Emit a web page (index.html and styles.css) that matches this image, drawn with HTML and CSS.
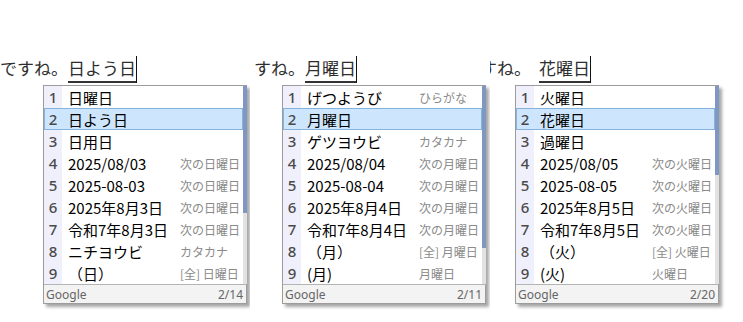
FILE: index.html
```html
<!DOCTYPE html>
<html lang="ja">
<head>
<meta charset="utf-8">
<title>IME candidates</title>
<link rel="stylesheet" href="styles.css">
</head>
<body>
<div class="stage">
  <section class="shot shot-1">
    <div class="line"><span class="pre">ですね。</span><span class="comp">日よう日</span><span class="caret"></span></div>
    <div class="cand">
      <div class="body">
        <ol class="rows">
          <li class="row"><span class="num">1</span><span class="txt">日曜日</span><span class="note"></span></li>
          <li class="row sel"><span class="num">2</span><span class="txt">日よう日</span><span class="note"></span></li>
          <li class="row"><span class="num">3</span><span class="txt">日用日</span><span class="note"></span></li>
          <li class="row"><span class="num">4</span><span class="txt">2025/08/03</span><span class="note">次の日曜日</span></li>
          <li class="row"><span class="num">5</span><span class="txt">2025-08-03</span><span class="note">次の日曜日</span></li>
          <li class="row"><span class="num">6</span><span class="txt">2025年8月3日</span><span class="note">次の日曜日</span></li>
          <li class="row"><span class="num">7</span><span class="txt">令和7年8月3日</span><span class="note">次の日曜日</span></li>
          <li class="row"><span class="num">8</span><span class="txt">ニチヨウビ</span><span class="note">カタカナ</span></li>
          <li class="row"><span class="num">9</span><span class="txt">（日）</span><span class="note">[全] 日曜日</span></li>
        </ol>
        <div class="scroll"><div class="thumb" style="height:127px"></div></div>
      </div>
      <div class="foot"><span>Google</span><span>2/14</span></div>
    </div>
  </section>

  <section class="shot shot-2">
    <div class="line"><span class="pre">すね。</span><span class="comp">月曜日</span><span class="caret"></span></div>
    <div class="cand">
      <div class="body">
        <ol class="rows">
          <li class="row"><span class="num">1</span><span class="txt">げつようび</span><span class="note">ひらがな</span></li>
          <li class="row sel"><span class="num">2</span><span class="txt">月曜日</span><span class="note"></span></li>
          <li class="row"><span class="num">3</span><span class="txt">ゲツヨウビ</span><span class="note">カタカナ</span></li>
          <li class="row"><span class="num">4</span><span class="txt">2025/08/04</span><span class="note">次の月曜日</span></li>
          <li class="row"><span class="num">5</span><span class="txt">2025-08-04</span><span class="note">次の月曜日</span></li>
          <li class="row"><span class="num">6</span><span class="txt">2025年8月4日</span><span class="note">次の月曜日</span></li>
          <li class="row"><span class="num">7</span><span class="txt">令和7年8月4日</span><span class="note">次の月曜日</span></li>
          <li class="row"><span class="num">8</span><span class="txt">（月）</span><span class="note">[全] 月曜日</span></li>
          <li class="row"><span class="num">9</span><span class="txt">(月)</span><span class="note">月曜日</span></li>
        </ol>
        <div class="scroll"><div class="thumb" style="height:162px"></div></div>
      </div>
      <div class="foot"><span>Google</span><span>2/11</span></div>
    </div>
  </section>

  <section class="shot shot-3">
    <div class="line"><span class="pre">すね。</span><span class="comp">花曜日</span><span class="caret"></span></div>
    <div class="cand">
      <div class="body">
        <ol class="rows">
          <li class="row"><span class="num">1</span><span class="txt">火曜日</span><span class="note"></span></li>
          <li class="row sel"><span class="num">2</span><span class="txt">花曜日</span><span class="note"></span></li>
          <li class="row"><span class="num">3</span><span class="txt">過曜日</span><span class="note"></span></li>
          <li class="row"><span class="num">4</span><span class="txt">2025/08/05</span><span class="note">次の火曜日</span></li>
          <li class="row"><span class="num">5</span><span class="txt">2025-08-05</span><span class="note">次の火曜日</span></li>
          <li class="row"><span class="num">6</span><span class="txt">2025年8月5日</span><span class="note">次の火曜日</span></li>
          <li class="row"><span class="num">7</span><span class="txt">令和7年8月5日</span><span class="note">次の火曜日</span></li>
          <li class="row"><span class="num">8</span><span class="txt">（火）</span><span class="note">[全] 火曜日</span></li>
          <li class="row"><span class="num">9</span><span class="txt">(火)</span><span class="note">火曜日</span></li>
        </ol>
        <div class="scroll"><div class="thumb" style="height:89px"></div></div>
      </div>
      <div class="foot"><span>Google</span><span>2/20</span></div>
    </div>
  </section>
</div>
</body>
</html>
```

FILE: styles.css
```css
* { box-sizing: border-box; }

html, body {
  margin: 0;
  padding: 0;
  background: #ffffff;
}

body {
  font-family: "Noto Sans CJK JP", "Noto Sans", sans-serif;
  color: #000;
}

.stage {
  display: flex;
  height: 322px;
  overflow: hidden;
}

.shot {
  flex: none;
  overflow: hidden;
  height: 322px;
}

.shot-1 { width: 250px; }
.shot-2 { width: 240px; }
.shot-3 { width: 253px; }

.line {
  margin-top: 56px;
  height: 27px;
  display: flex;
  align-items: flex-start;
  font-size: 17px;
  line-height: 24px;
  color: #2e2e2e;
  white-space: nowrap;
}

.shot-2 .line { padding-left: 4px; }
.shot-3 .line { margin-left: -10px; }
.shot-3 .comp { margin-left: 8px; }

.comp {
  display: inline-block;
  height: 27px;
  border-bottom: 2px solid #333;
}

.caret {
  display: inline-block;
  width: 1px;
  height: 27px;
  background: #111;
}

.cand {
  width: 204px;
  margin-top: 2px;
  border: 1px solid #9c9c9c;
  border-right: none;
  background: #fff;
  box-shadow: 3px 3px 3px rgba(0, 0, 0, 0.35);
}

.shot-1 .cand { margin-left: 43px; }
.shot-2 .cand { margin-left: 32px; }
.shot-3 .cand { margin-left: 25px; }

.body {
  display: flex;
}

.rows {
  flex: 1;
  list-style: none;
  margin: 0;
  padding: 0;
}

.row {
  display: grid;
  grid-template-columns: 18px 118px 1fr;
  align-items: center;
  height: 22px;
  white-space: nowrap;
}

.num {
  height: 100%;
  display: flex;
  align-items: center;
  justify-content: center;
  background: #eff0fb;
  color: #4a4a4a;
  font-family: "Noto Sans", sans-serif;
  font-size: 15px;
  font-weight: 500;
}

.txt {
  padding-left: 6px;
  font-size: 15px;
  color: #000;
}

.note {
  font-size: 12px;
  color: #8a8a8a;
}

.row.sel {
  background: #cde6fd;
  box-shadow: inset 0 0 0 1px #86b2de;
}

.row.sel .num { background: transparent; }

.scroll {
  width: 4px;
  background: #e2e2e2;
}

.thumb {
  background: #7f98c2;
}

.foot {
  height: 19px;
  border-top: 1px solid #b4b4b4;
  border-right: 1px solid #9c9c9c;
  background: #f3f3f3;
  display: flex;
  justify-content: space-between;
  align-items: center;
  padding: 0 3px 0 2px;
  font-family: "Noto Sans", sans-serif;
  font-size: 12px;
  color: #666;
}
```
